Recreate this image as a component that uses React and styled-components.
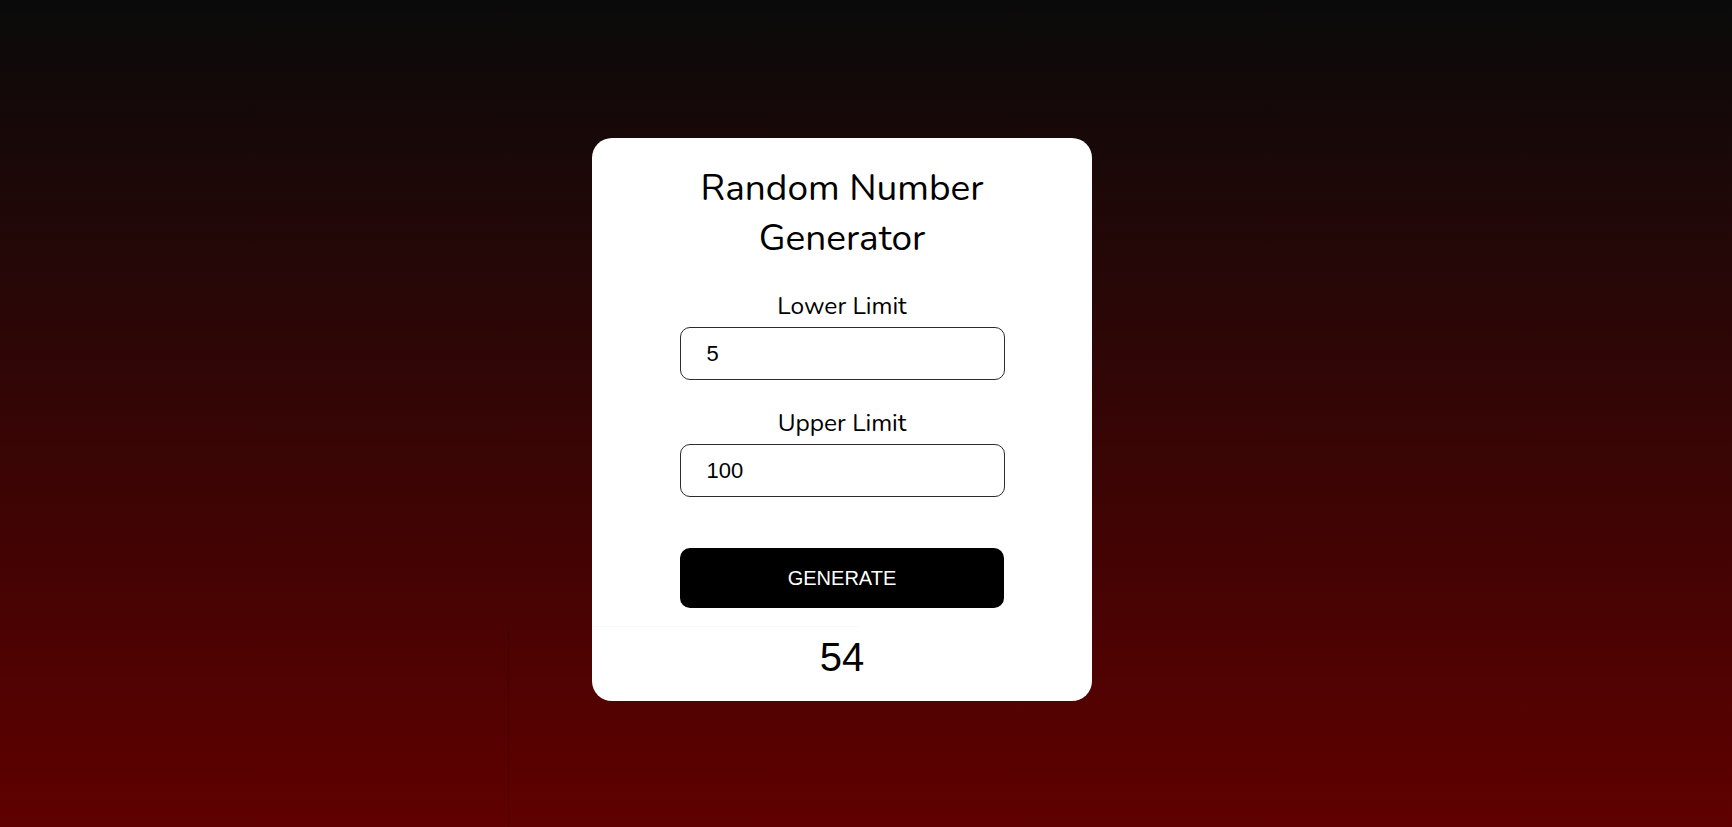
import React, { useState } from "react";
import styled, { createGlobalStyle } from "styled-components";

const GlobalStyle = createGlobalStyle`
  html, body {
    margin: 0;
    padding: 0;
    height: 100%;
  }
  body {
    background: linear-gradient(to bottom, #0a0a0a 0%, #600000 100%);
    font-family: 'Nunito', 'Lato', sans-serif;
  }
  #root {
    min-height: 100vh;
  }
`;

const Page = styled.main`
  position: relative;
  min-height: 100vh;
  display: flex;
  justify-content: center;
  align-items: flex-start;
  padding: 138px 48px 0 0;
  box-sizing: border-box;
`;

// faint leftover edge visible under the card in the screenshot
const Ghost = styled.div`
  position: absolute;
  left: 508px;
  top: 626px;
  width: 350px;
  bottom: 0;
  border-top: 1px solid rgba(0, 0, 0, 0.025);
  border-left: 1px solid rgba(0, 0, 0, 0.12);
  pointer-events: none;
  z-index: 2;
`;

const Card = styled.section`
  width: 500px;
  box-sizing: border-box;
  background: #ffffff;
  border-radius: 20px;
  padding: 25px 0 21px;
  display: flex;
  flex-direction: column;
  align-items: center;
`;

const Title = styled.h1`
  margin: 0;
  font-family: 'Nunito', 'Lato', sans-serif;
  font-weight: 400;
  font-size: 37px;
  line-height: 50px;
  text-align: center;
  color: #000;
  width: 300px;
`;

const Field = styled.div`
  display: flex;
  flex-direction: column;
  align-items: center;
  margin-top: ${(p) => p.$top}px;
`;

const Label = styled.label`
  font-family: 'Nunito', 'Lato', sans-serif;
  font-size: 24.5px;
  line-height: 30px;
  color: #000;
`;

const Input = styled.input`
  margin-top: 6px;
  width: 325px;
  height: 53px;
  box-sizing: border-box;
  border: 1px solid #2b2b2b;
  border-radius: 10px;
  padding: 0 26px;
  font-family: 'Liberation Sans', Arial, sans-serif;
  font-size: 22px;
  color: #000;
  background: #fff;
  outline: none;
`;

const Button = styled.button`
  margin-top: 51px;
  width: 324px;
  height: 60px;
  border: none;
  border-radius: 10px;
  background: #000;
  color: #fff;
  font-family: 'Liberation Sans', Arial, sans-serif;
  font-size: 20px;
  text-transform: uppercase;
  cursor: pointer;
`;

const Result = styled.p`
  margin: 26px 0 0;
  font-family: 'Liberation Sans', Arial, sans-serif;
  font-size: 40px;
  line-height: 46px;
  color: #000;
`;

export default function App() {
  const [low, setLow] = useState("5");
  const [high, setHigh] = useState("100");
  const [value, setValue] = useState(54);

  const generate = () => {
    const a = parseInt(low, 10) || 0;
    const b = parseInt(high, 10) || 0;
    setValue(Math.floor(Math.random() * (b - a + 1)) + a);
  };

  return (
    <>
      <GlobalStyle />
      <Page>
        <Card>
          <Title>Random Number Generator</Title>
          <Field $top={28}>
            <Label htmlFor="low">Lower Limit</Label>
            <Input id="low" value={low} onChange={(e) => setLow(e.target.value)} />
          </Field>
          <Field $top={28}>
            <Label htmlFor="high">Upper Limit</Label>
            <Input id="high" value={high} onChange={(e) => setHigh(e.target.value)} />
          </Field>
          <Button onClick={generate}>Generate</Button>
          <Result>{value}</Result>
        </Card>
        <Ghost />
      </Page>
    </>
  );
}
